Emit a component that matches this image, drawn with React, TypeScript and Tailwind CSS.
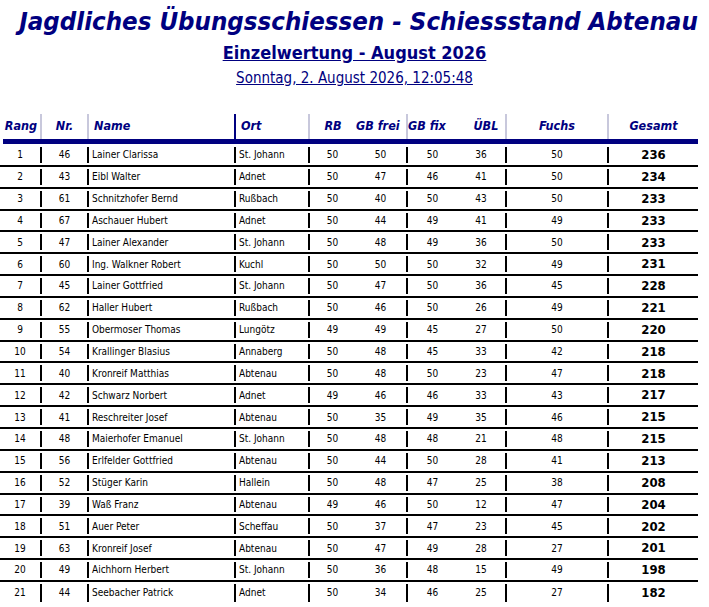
const rows: [number, number, string, string, number, number, number, number, number, number][] = [
  [1, 46, "Lainer Clarissa", "St. Johann", 50, 50, 50, 36, 50, 236],
  [2, 43, "Eibl Walter", "Adnet", 50, 47, 46, 41, 50, 234],
  [3, 61, "Schnitzhofer Bernd", "Rußbach", 50, 40, 50, 43, 50, 233],
  [4, 67, "Aschauer Hubert", "Adnet", 50, 44, 49, 41, 49, 233],
  [5, 47, "Lainer Alexander", "St. Johann", 50, 48, 49, 36, 50, 233],
  [6, 60, "Ing. Walkner Robert", "Kuchl", 50, 50, 50, 32, 49, 231],
  [7, 45, "Lainer Gottfried", "St. Johann", 50, 47, 50, 36, 45, 228],
  [8, 62, "Haller Hubert", "Rußbach", 50, 46, 50, 26, 49, 221],
  [9, 55, "Obermoser Thomas", "Lungötz", 49, 49, 45, 27, 50, 220],
  [10, 54, "Krallinger Blasius", "Annaberg", 50, 48, 45, 33, 42, 218],
  [11, 40, "Kronreif Matthias", "Abtenau", 50, 48, 50, 23, 47, 218],
  [12, 42, "Schwarz Norbert", "Adnet", 49, 46, 46, 33, 43, 217],
  [13, 41, "Reschreiter Josef", "Abtenau", 50, 35, 49, 35, 46, 215],
  [14, 48, "Maierhofer Emanuel", "St. Johann", 50, 48, 48, 21, 48, 215],
  [15, 56, "Erlfelder Gottfried", "Abtenau", 50, 44, 50, 28, 41, 213],
  [16, 52, "Stüger Karin", "Hallein", 50, 48, 47, 25, 38, 208],
  [17, 39, "Waß Franz", "Abtenau", 49, 46, 50, 12, 47, 204],
  [18, 51, "Auer Peter", "Scheffau", 50, 37, 47, 23, 45, 202],
  [19, 63, "Kronreif Josef", "Abtenau", 50, 47, 49, 28, 27, 201],
  [20, 49, "Aichhorn Herbert", "St. Johann", 50, 36, 48, 15, 49, 198],
  [21, 44, "Seebacher Patrick", "Adnet", 50, 34, 46, 25, 27, 182],
];

const font = { fontFamily: '"DejaVu Sans Condensed", "DejaVu Sans", sans-serif' };

export default function App() {
  return (
    <div className="w-[709px] bg-white text-black" style={font}>
      {/* Titles */}
      <div className="flex flex-col items-center pt-[6px] text-[#000080]">
        <h1 className="ml-[8px] text-[25.6px] leading-[30px] font-bold italic">
          Jagdliches Übungsschiessen - Schiessstand Abtenau
        </h1>
        <h2 className="mt-[5px] text-[18px] leading-[24px] font-bold underline">
          Einzelwertung - August 2026
        </h2>
        <p className="mt-[2px] text-[15px] leading-[22px] underline">Sonntag, 2. August 2026, 12:05:48</p>
      </div>

      {/* Table */}
      <div className="mt-[25px] w-[698px]">
        {/* Header */}
        <div className="flex h-[25px] items-center whitespace-nowrap text-[12.5px] font-bold italic text-[#000080]">
          <div className="w-[40px] pl-[2px] text-center">Rang</div>
          <div className="flex h-full w-[47px] items-center justify-center border-l-2 border-[#c8c8dc]">Nr.</div>
          <div className="flex h-full w-[147px] items-center border-l-2 border-[#c8c8dc] pl-[5px]">Name</div>
          <div className="flex h-full w-[74px] items-center border-l-2 border-[#000080] pl-[5px]">Ort</div>
          <div className="flex h-full w-[98px] items-center border-l-2 border-[#c8c8dc]">
            <span className="w-[46px] text-center">RB</span>
            <span className="w-[24px] text-center">GB frei</span>
          </div>
          <div className="flex h-full w-[99px] items-center border-l-2 border-[#c8c8dc]">
            <span className="w-[38px] text-center">GB fix</span>
            <span className="ml-[21px] w-[40px] text-center">ÜBL</span>
          </div>
          <div className="flex h-full w-[102px] items-center justify-center border-l-2 border-[#c8c8dc]">Fuchs</div>
          <div className="flex h-full w-[91px] items-center justify-center border-l-2 border-[#c8c8dc]">Gesamt</div>
        </div>
        <div className="ml-[3px] h-[5px] bg-[#000080]" />

        {/* Body */}
        <div className="pt-[1px]">
          {rows.map((r, i) => (
            <div
              key={r[0]}
              className={`flex h-[21.85px] items-stretch text-[10px] ${i < rows.length - 1 ? "border-b-2 border-black" : ""}`}
            >
              <div className="flex w-[40px] items-center justify-center">{r[0]}</div>
              <div className="my-[2px] flex w-[47px] items-center justify-center border-l-2 border-black">{r[1]}</div>
              <div className="my-[2px] flex w-[147px] items-center border-l-2 border-black pl-[3px]">{r[2]}</div>
              <div className="my-[2px] flex w-[74px] items-center border-l-2 border-black pl-[3px]">{r[3]}</div>
              <div className="my-[2px] flex w-[98px] items-center border-l-2 border-black">
                <span className="w-[46px] text-center">{r[4]}</span>
                <span className="w-[52px] text-center">{r[5]}</span>
              </div>
              <div className="my-[2px] flex w-[99px] items-center border-l-2 border-black">
                <span className="w-[50px] text-center">{r[6]}</span>
                <span className="w-[49px] text-center">{r[7]}</span>
              </div>
              <div className="my-[2px] flex w-[102px] items-center justify-center border-l-2 border-black">{r[8]}</div>
              <div className="my-[2px] flex w-[91px] items-center justify-center border-l-2 border-black text-[13px] font-bold">
                {r[9]}
              </div>
            </div>
          ))}
        </div>
      </div>
    </div>
  );
}
